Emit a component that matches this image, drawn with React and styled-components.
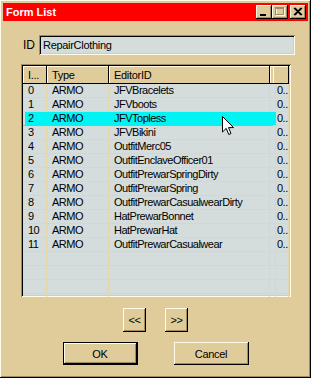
import React from 'react'
import styled, { createGlobalStyle, css } from 'styled-components'

const FACE = '#e0cc9a'
const LIGHT = '#fffbe8'
const SHADOW = '#a08c60'
const FIELD = '#d4dcdc'
const GRID = '#e6d6a6'

const rows = [
    ['0', 'ARMO', 'JFVBracelets'],
    ['1', 'ARMO', 'JFVboots'],
    ['2', 'ARMO', 'JFVTopless'],
    ['3', 'ARMO', 'JFVBikini'],
    ['4', 'ARMO', 'OutfitMerc05'],
    ['5', 'ARMO', 'OutfitEnclaveOfficer01'],
    ['6', 'ARMO', 'OutfitPrewarSpringDirty'],
    ['7', 'ARMO', 'OutfitPrewarSpring'],
    ['8', 'ARMO', 'OutfitPrewarCasualwearDirty'],
    ['9', 'ARMO', 'HatPrewarBonnet'],
    ['10', 'ARMO', 'HatPrewarHat'],
    ['11', 'ARMO', 'OutfitPrewarCasualwear'],
]

const raised = css`
box-shadow: inset -1px -1px #000, inset 1px 1px ${LIGHT}, inset -2px -2px ${SHADOW}, inset 2px 2px ${FACE};
`

const sunken = css`
box-shadow: inset 1px 1px ${SHADOW}, inset -1px -1px ${LIGHT}, inset 2px 2px #000, inset -2px -2px ${FACE};
`

const App = () => {
  return (
    <>
      <GlobalStyle />
      <Window>
        <TitleBar>
            <Title>Form List</Title>
            <TitleButtons>
                <TitleButton>
                    <svg width='16' height='14' viewBox='0 0 16 14'>
                        <rect x='4' y='9' width='6' height='2' fill='#000' />
                    </svg>
                </TitleButton>
                <TitleButton>
                    <svg width='16' height='14' viewBox='0 0 16 14'>
                        <rect x='4.5' y='3.5' width='8' height='7' fill='none' stroke={LIGHT} />
                        <rect x='3.5' y='2.5' width='8' height='7' fill='none' stroke={SHADOW} />
                        <line x1='3' y1='3.5' x2='12' y2='3.5' stroke={SHADOW} />
                    </svg>
                </TitleButton>
                <TitleButton $gap>
                    <svg width='16' height='14' viewBox='0 0 16 14'>
                        <path d='M4 3 L11 10 M5 3 L12 10 M11 3 L4 10 M12 3 L5 10' stroke='#000' strokeWidth='1.2' />
                    </svg>
                </TitleButton>
            </TitleButtons>
        </TitleBar>
        <Body>
            <IdRow>
                <IdLabel>ID</IdLabel>
                <IdField>RepairClothing</IdField>
            </IdRow>
            <ListView>
                <Header>
                    <HeaderCell>I...</HeaderCell>
                    <HeaderCell>Type</HeaderCell>
                    <HeaderCell>EditorID</HeaderCell>
                    <HeaderCell />
                    <HeaderCell />
                </Header>
                {rows.map((r) => (
                    <Row key={r[0]}>
                        <Cell $selected={r[0] === '2'} $first>{r[0]}</Cell>
                        <Cell $selected={r[0] === '2'}>{r[1]}</Cell>
                        <Cell $selected={r[0] === '2'}>{r[2]}</Cell>
                        <Cell $selected={r[0] === '2'} />
                        <Cell $last>0..</Cell>
                    </Row>
                ))}
                {[0, 1, 2, 3].map((i) => (
                    <Row key={'e' + i}>
                        <Cell />
                        <Cell />
                        <Cell />
                        <Cell />
                        <Cell $last />
                    </Row>
                ))}
            </ListView>
            <NavRow>
                <NavButton>&lt;&lt;</NavButton>
                <NavButton>&gt;&gt;</NavButton>
            </NavRow>
            <ActionRow>
                <ActionButton $default>OK</ActionButton>
                <ActionButton>Cancel</ActionButton>
            </ActionRow>
        </Body>
        <Cursor width='12' height='20' viewBox='0 0 12 20'>
            <path d='M0.5 0.5 L0.5 16 L4.2 12.4 L6.8 18.5 L9 17.5 L6.5 11.6 L11.5 11.6 Z' fill='#fff' stroke='#000' strokeWidth='1' />
        </Cursor>
      </Window>
    </>
  )
}

const GlobalStyle = createGlobalStyle`
body {
    margin: 0;
    background: #fff;
    font-family: "Liberation Sans", Arial, sans-serif;
}
`

const Window = styled.div`
position: relative;
width: 311px;
height: 378px;
box-sizing: border-box;
padding: 3px;
background: ${FACE};
${raised}
font-size: 11px;
letter-spacing: -0.3px;
color: #000;
overflow: hidden;
`

const TitleBar = styled.div`
height: 18px;
background: #ff0000;
display: flex;
align-items: center;
justify-content: space-between;
padding: 0 2px 0 3px;
`

const Title = styled.span`
color: #fff;
font-weight: bold;
font-size: 11px;
letter-spacing: 0;
`

const TitleButtons = styled.div`
display: flex;
align-items: center;
`

const TitleButton = styled.div`
width: 16px;
height: 14px;
margin-left: ${(p) => (p.$gap ? '2px' : '0')};
background: ${FACE};
${raised}
svg {
    display: block;
}
`

const Body = styled.div`
padding: 0 0 0 18px;
display: flex;
flex-direction: column;
`

const IdRow = styled.div`
display: flex;
align-items: center;
margin-top: 14px;
padding-left: 2px;
`

const IdLabel = styled.span`
width: 16px;
font-size: 12px;
letter-spacing: 0;
`

const IdField = styled.div`
width: 256px;
height: 20px;
box-sizing: border-box;
padding: 3px 0 0 4px;
background: ${FIELD};
${sunken}
line-height: 14px;
`

const ListView = styled.div`
margin-top: 9px;
width: 270px;
height: 233px;
box-sizing: border-box;
padding: 2px;
background: ${FIELD};
${sunken}
overflow: hidden;
`

const columns = '24px 62px 161px 3px 16px'

const Header = styled.div`
display: grid;
grid-template-columns: ${columns};
height: 18px;
`

const HeaderCell = styled.div`
background: ${FACE};
box-shadow: inset -1px -1px #000, inset 1px 1px ${LIGHT};
padding: 3px 0 0 5px;
line-height: 13px;
white-space: nowrap;
overflow: hidden;
`

const Row = styled.div`
display: grid;
grid-template-columns: ${columns};
height: 14px;
`

const Cell = styled.div`
box-sizing: border-box;
border-right: 1px solid ${GRID};
border-bottom: 1px solid ${GRID};
padding-left: ${(p) => (p.$last ? '4px' : '5px')};
line-height: 13px;
letter-spacing: -0.5px;
white-space: nowrap;
overflow: hidden;
${(p) => p.$selected && css`
    background: #00f4f4;
    border-right-color: #00f4f4;
    border-bottom-color: #00f4f4;
`}
${(p) => p.$selected && p.$first && css`
    box-shadow: inset 2px 0 ${FIELD};
`}
`

const NavRow = styled.div`
display: flex;
justify-content: center;
gap: 19px;
margin: 11px 0 0 -18px;
`

const NavButton = styled.div`
width: 23px;
height: 24px;
box-sizing: border-box;
display: flex;
align-items: center;
justify-content: center;
background: ${FACE};
${raised}
`

const ActionRow = styled.div`
display: flex;
justify-content: center;
gap: 36px;
margin: 10px 0 0 -18px;
`

const ActionButton = styled.div`
width: 75px;
height: 23px;
box-sizing: border-box;
display: flex;
align-items: center;
justify-content: center;
background: ${FACE};
${(p) => p.$default
    ? css`box-shadow: inset 0 0 0 1px #000, inset -2px -2px #000, inset 2px 2px ${LIGHT}, inset -3px -3px ${SHADOW};`
    : raised}
`

const Cursor = styled.svg`
position: absolute;
left: 222px;
top: 116px;
`

export default App
